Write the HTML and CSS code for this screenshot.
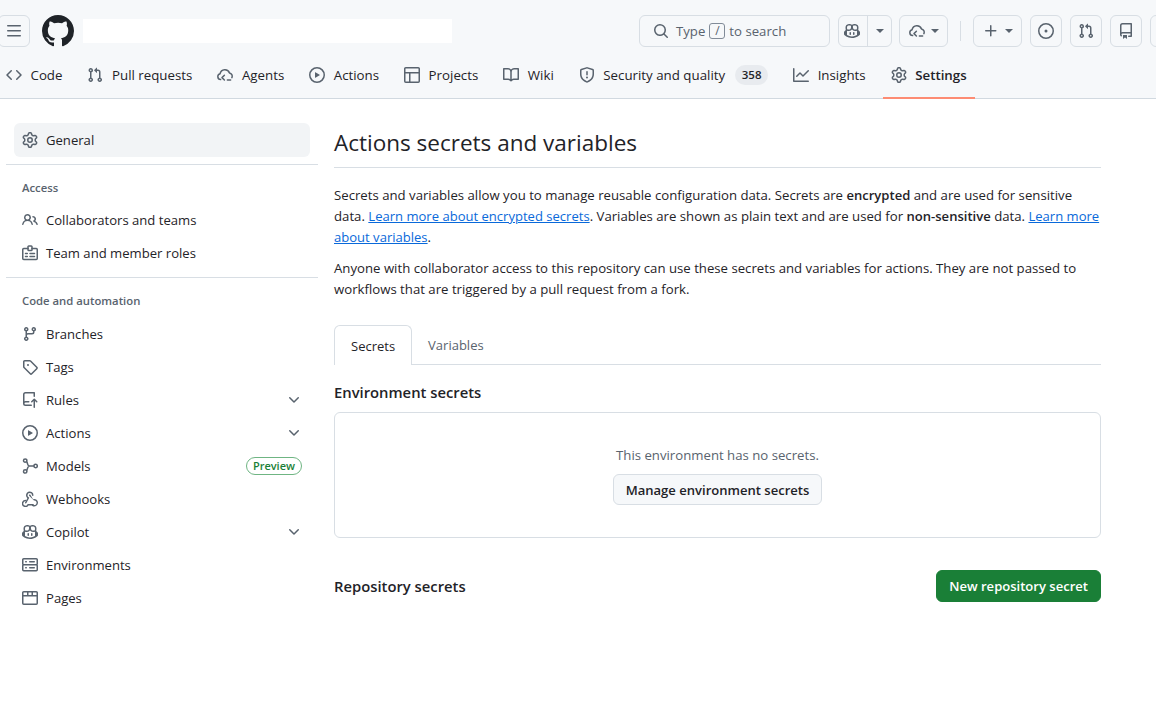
FILE: index.html
```html
<!doctype html>
<html lang="en">
	<head>
		<meta charset="utf-8">
		<title>Actions secrets and variables</title>
		<link rel="stylesheet" href="styles.css">
	</head>
	<body>
		<svg class="defs" width="0" height="0">
			<symbol id="i-bars" viewBox="0 0 16 16"><path d="M1 2.75A.75.75 0 011.75 2h12.5a.75.75 0 010 1.5H1.75A.75.75 0 011 2.75zm0 5A.75.75 0 011.75 7h12.5a.75.75 0 010 1.5H1.75A.75.75 0 011 7.75zM1.75 12h12.5a.75.75 0 010 1.5H1.75a.75.75 0 010-1.5z"/></symbol>
			<symbol id="i-github" viewBox="0 0 16 16"><path d="M8 0c4.42 0 8 3.58 8 8a8.013 8.013 0 01-5.45 7.59c-.4.08-.55-.17-.55-.38 0-.27.01-1.13.01-2.2 0-.75-.25-1.23-.54-1.48 1.78-.2 3.65-.88 3.65-3.95 0-.88-.31-1.59-.82-2.15.08-.2.36-1.02-.08-2.12 0 0-.67-.22-2.2.82-.64-.18-1.32-.27-2-.27-.68 0-1.36.09-2 .27-1.53-1.03-2.2-.82-2.2-.82-.44 1.1-.16 1.92-.08 2.12-.51.56-.82 1.28-.82 2.15 0 3.06 1.86 3.75 3.64 3.95-.23.2-.44.55-.51 1.07-.46.21-1.61.55-2.33-.66-.15-.24-.6-.83-1.23-.82-.67.01-.27.38.01.53.34.19.73.9.82 1.13.16.45.68 1.31 2.69.94 0 .67.01 1.3.01 1.49 0 .21-.15.45-.55.38A7.995 7.995 0 010 8c0-4.42 3.58-8 8-8Z"/></symbol>
			<symbol id="i-search" viewBox="0 0 16 16"><path d="M10.68 11.74a6 6 0 01-7.922-8.982 6 6 0 018.982 7.922l3.04 3.04a.749.749 0 01-.326 1.275.749.749 0 01-.734-.215zM11.5 7a4.499 4.499 0 10-8.997 0A4.499 4.499 0 0011.5 7z"/></symbol>
			<symbol id="i-copilot" viewBox="0 0 16 16"><path d="M7.998 15.035c-4.562 0-7.873-2.914-7.998-3.749V9.338c.085-.628.677-1.686 1.588-2.065.013-.07.024-.143.036-.218.029-.183.06-.384.126-.612-.201-.508-.254-1.084-.254-1.656 0-.87.128-1.769.693-2.484.579-.733 1.494-1.124 2.724-1.261 1.206-.134 2.262.034 2.944.765.05.053.096.108.139.165.044-.057.094-.112.143-.165.682-.731 1.738-.899 2.944-.765 1.23.137 2.145.528 2.724 1.261.566.715.693 1.614.693 2.484 0 .572-.053 1.148-.254 1.656.066.228.098.429.126.612.012.076.024.148.037.218.924.385 1.522 1.471 1.591 2.095v1.872c0 .766-3.351 3.795-8.002 3.795Zm0-1.485c2.28 0 4.584-1.11 5.002-1.433V7.862l-.023-.116c-.49.21-1.075.291-1.727.291-1.146 0-2.059-.327-2.71-.991A3.222 3.222 0 0 1 8 6.303a3.24 3.24 0 0 1-.544.743c-.65.664-1.563.991-2.71.991-.652 0-1.236-.081-1.727-.291l-.023.116v4.255c.419.323 2.722 1.433 5.002 1.433ZM6.762 2.83c-.193-.206-.637-.413-1.682-.297-1.019.113-1.479.404-1.713.7-.247.312-.369.789-.369 1.554 0 .793.129 1.171.308 1.371.162.181.519.379 1.442.379.853 0 1.339-.235 1.638-.54.315-.322.527-.827.617-1.553.117-.935-.037-1.395-.241-1.614Zm4.155-.297c-1.044-.116-1.488.091-1.681.297-.204.219-.359.679-.242 1.614.091.726.303 1.231.618 1.553.299.305.784.54 1.638.54.922 0 1.28-.198 1.442-.379.179-.2.308-.578.308-1.371 0-.765-.123-1.242-.37-1.554-.233-.296-.693-.587-1.713-.7Z"/><path d="M6.25 9.037a.75.75 0 0 1 .75.75v1.501a.75.75 0 0 1-1.5 0V9.787a.75.75 0 0 1 .75-.75Zm4.25.75v1.501a.75.75 0 0 1-1.5 0V9.787a.75.75 0 0 1 1.5 0Z"/></symbol>
			<symbol id="i-agent" viewBox="0 0 16 16"><g fill="none" stroke="currentColor" stroke-width="1.5" stroke-linecap="round" stroke-linejoin="round"><path d="M3.6 12.6A3 3 0 0 1 3.1 6.7 4.9 4.9 0 0 1 12.5 6a3.3 3.3 0 0 1 2.4 4.6"/><path d="M7.4 8.2 5 10.6l2.4 2.4"/><path d="M10.4 13h3.2"/></g></symbol>
			<symbol id="i-plus" viewBox="0 0 16 16"><path d="M7.75 2a.75.75 0 01.75.75V7h4.25a.75.75 0 010 1.5H8.5v4.25a.75.75 0 01-1.5 0V8.5H2.75a.75.75 0 010-1.5H7V2.75A.75.75 0 017.75 2z"/></symbol>
			<symbol id="i-issue" viewBox="0 0 16 16"><path d="M8 9.5a1.5 1.5 0 100-3 1.5 1.5 0 000 3z"/><path d="M8 0a8 8 0 110 16A8 8 0 018 0zM1.5 8a6.5 6.5 0 1013 0 6.5 6.5 0 00-13 0z"/></symbol>
			<symbol id="i-pr" viewBox="0 0 16 16"><path d="M1.5 3.25a2.25 2.25 0 113 2.122v5.256a2.251 2.251 0 11-1.5 0V5.372A2.25 2.25 0 011.5 3.25zm5.677-.177L9.573.677A.25.25 0 0110 .854V2.5h1A2.5 2.5 0 0113.5 5v5.628a2.251 2.251 0 11-1.5 0V5a1 1 0 00-1-1h-1v1.646a.25.25 0 01-.427.177L7.177 3.427a.25.25 0 010-.354zM3.75 2.5a.75.75 0 100 1.5.75.75 0 000-1.5zm0 9.5a.75.75 0 100 1.5.75.75 0 000-1.5zm8.25.75a.75.75 0 101.5 0 .75.75 0 00-1.5 0z"/></symbol>
			<symbol id="i-repo" viewBox="0 0 16 16"><path d="M2 2.5A2.5 2.5 0 014.5 0h8.75a.75.75 0 01.75.75v12.5a.75.75 0 01-.75.75h-2.5a.75.75 0 010-1.5h1.75v-2h-8a1 1 0 00-.714 1.7.75.75 0 11-1.072 1.05A2.495 2.495 0 012 11.5zm10.5-1h-8a1 1 0 00-1 1v6.708A2.486 2.486 0 014.5 9h8zM5 12.25a.25.25 0 01.25-.25h3.5a.25.25 0 01.25.25v3.25a.25.25 0 01-.4.2l-1.45-1.087a.249.249 0 00-.3 0L5.4 15.7a.25.25 0 01-.4-.2z"/></symbol>
			<symbol id="i-code" viewBox="0 0 16 16"><path d="M11.28 3.22l4.25 4.25a.75.75 0 010 1.06l-4.25 4.25a.749.749 0 01-1.275-.326.749.749 0 01.215-.734L13.94 8l-3.72-3.72a.749.749 0 01.326-1.275.749.749 0 01.734.215zm-6.56 0a.751.751 0 011.042.018.751.751 0 01.018 1.042L2.06 8l3.72 3.72a.749.749 0 01-.326 1.275.749.749 0 01-.734-.215L.47 8.53a.75.75 0 010-1.06z"/></symbol>
			<symbol id="i-play" viewBox="0 0 16 16"><path d="M8 0a8 8 0 110 16A8 8 0 018 0zM1.5 8a6.5 6.5 0 1013 0 6.5 6.5 0 00-13 0zm4.879-2.773l4.264 2.559a.25.25 0 010 .428l-4.264 2.559A.25.25 0 016 10.559V5.442a.25.25 0 01.379-.215z"/></symbol>
			<symbol id="i-table" viewBox="0 0 16 16"><path d="M0 1.75C0 .784.784 0 1.75 0h12.5C15.216 0 16 .784 16 1.75v12.5A1.75 1.75 0 0114.25 16H1.75A1.75 1.75 0 010 14.25zM6.5 6.5v8h7.75a.25.25 0 00.25-.25V6.5zm8-1.5V1.75a.25.25 0 00-.25-.25H1.75a.25.25 0 00-.25.25V5zM1.5 6.5v7.75c0 .138.112.25.25.25H5v-8z"/></symbol>
			<symbol id="i-book" viewBox="0 0 16 16"><path d="M0 1.75A.75.75 0 01.75 1h4.253c1.227 0 2.317.59 3 1.501A3.743 3.743 0 0111.006 1h4.245a.75.75 0 01.75.75v10.5a.75.75 0 01-.75.75h-4.507a2.25 2.25 0 00-1.591.659l-.622.621a.75.75 0 01-1.06 0l-.622-.621A2.25 2.25 0 005.258 13H.75a.75.75 0 01-.75-.75zm7.251 10.324l.004-5.073-.002-2.253A2.25 2.25 0 005.003 2.5H1.5v9h3.757a3.75 3.75 0 011.994.574zM8.755 4.75l-.004 7.322a3.752 3.752 0 011.992-.572H14.5v-9h-3.495a2.25 2.25 0 00-2.25 2.25z"/></symbol>
			<symbol id="i-shield" viewBox="0 0 16 16"><path d="M7.467.133a1.748 1.748 0 011.066 0l5.25 1.68A1.75 1.75 0 0115 3.48V7c0 1.566-.32 3.182-1.303 4.682-.983 1.498-2.585 2.813-5.032 3.855a1.697 1.697 0 01-1.33 0c-2.447-1.042-4.049-2.357-5.032-3.855C1.32 10.182 1 8.566 1 7V3.48a1.75 1.75 0 011.217-1.667zm.61 1.429a.25.25 0 00-.153 0l-5.25 1.68a.25.25 0 00-.174.238V7c0 1.358.275 2.666 1.057 3.86.784 1.194 2.121 2.34 4.366 3.297a.196.196 0 00.154 0c2.245-.956 3.582-2.104 4.366-3.298C13.225 9.666 13.5 8.36 13.5 7V3.48a.251.251 0 00-.174-.237l-5.25-1.68zM8.75 4.75v3a.75.75 0 01-1.5 0v-3a.75.75 0 011.5 0zM9 10.5a1 1 0 11-2 0 1 1 0 012 0z"/></symbol>
			<symbol id="i-graph" viewBox="0 0 16 16"><path d="M1.5 1.75V13.5h13.75a.75.75 0 010 1.5H.75a.75.75 0 01-.75-.75V1.75a.75.75 0 011.5 0zm14.28 2.53l-5.25 5.25a.75.75 0 01-1.06 0L7 7.06 4.28 9.78a.751.751 0 01-1.042-.018.751.751 0 01-.018-1.042l3.25-3.25a.75.75 0 011.06 0L10 7.94l4.72-4.72a.751.751 0 011.042.018.751.751 0 01.018 1.042z"/></symbol>
			<symbol id="i-gear" viewBox="0 0 16 16"><path d="M8 0a8.2 8.2 0 01.701.031C9.444.095 9.99.645 10.16 1.29l.288 1.107c.018.066.079.158.212.224.231.114.454.243.668.386.123.082.233.09.299.071l1.103-.303c.644-.176 1.392.021 1.82.63.27.385.506.792.704 1.218.315.675.111 1.422-.364 1.891l-.814.806c-.049.048-.098.147-.088.294.016.257.016.515 0 .772-.01.147.038.246.088.294l.814.806c.475.469.679 1.216.364 1.891a7.977 7.977 0 01-.704 1.217c-.428.61-1.176.807-1.82.63l-1.102-.302c-.067-.019-.177-.011-.3.071a5.909 5.909 0 01-.668.386c-.133.066-.194.158-.211.224l-.29 1.106c-.168.646-.715 1.196-1.458 1.26a8.006 8.006 0 01-1.402 0c-.743-.064-1.289-.614-1.458-1.26l-.289-1.106c-.018-.066-.079-.158-.212-.224a5.738 5.738 0 01-.668-.386c-.123-.082-.233-.09-.299-.071l-1.103.303c-.644.176-1.392-.021-1.82-.63a8.12 8.12 0 01-.704-1.218c-.315-.675-.111-1.422.363-1.891l.815-.806c.05-.048.098-.147.088-.294a6.214 6.214 0 010-.772c.01-.147-.038-.246-.088-.294l-.815-.806C.635 6.045.431 5.298.746 4.623a7.92 7.92 0 01.704-1.217c.428-.61 1.176-.807 1.82-.63l1.102.302c.067.019.177.011.3-.071.214-.143.437-.272.668-.386.133-.066.194-.158.211-.224l.29-1.106C6.009.645 6.556.095 7.299.03 7.53.01 7.764 0 8 0zm-.571 1.525c-.036.003-.108.036-.137.146l-.289 1.105c-.147.561-.549.967-.998 1.189-.173.086-.34.183-.5.29-.417.278-.97.423-1.529.27l-1.103-.303c-.109-.03-.175.016-.195.045-.22.312-.412.644-.573.99-.014.031-.021.11.059.19l.815.806c.411.406.562.957.53 1.456a4.709 4.709 0 000 .582c.032.499-.119 1.05-.53 1.456l-.815.806c-.081.08-.073.159-.059.19.162.346.353.677.573.989.02.03.085.076.195.046l1.102-.303c.56-.153 1.113-.008 1.53.27.161.107.328.204.501.29.447.222.85.629.997 1.189l.289 1.105c.029.109.101.143.137.146a6.6 6.6 0 001.142 0c.036-.003.108-.036.137-.146l.289-1.105c.147-.561.549-.967.998-1.189.173-.086.34-.183.5-.29.417-.278.97-.423 1.529-.27l1.103.303c.109.029.175-.016.195-.045.22-.313.411-.644.573-.99.014-.031.021-.11-.059-.19l-.815-.806c-.411-.406-.562-.957-.53-1.456a4.709 4.709 0 000-.582c-.032-.499.119-1.05.53-1.456l.815-.806c.081-.08.073-.159.059-.19a6.464 6.464 0 00-.573-.989c-.02-.03-.085-.076-.195-.046l-1.102.303c-.56.153-1.113.008-1.53-.27a4.44 4.44 0 00-.501-.29c-.447-.222-.85-.629-.997-1.189l-.289-1.105c-.029-.11-.101-.143-.137-.146a6.6 6.6 0 00-1.142 0zM11 8a3 3 0 11-6 0 3 3 0 016 0zM9.5 8a1.5 1.5 0 10-3.001.001A1.5 1.5 0 009.5 8z"/></symbol>
			<symbol id="i-people" viewBox="0 0 16 16"><path d="M2 5.5a3.5 3.5 0 115.898 2.549 5.508 5.508 0 013.034 4.084.75.75 0 11-1.482.235 4 4 0 00-7.9 0 .75.75 0 01-1.482-.236A5.507 5.507 0 013.102 8.05 3.493 3.493 0 012 5.5zM11 4a3.001 3.001 0 012.22 5.018 5.01 5.01 0 012.56 3.012.749.749 0 01-.885.954.752.752 0 01-.549-.514 3.507 3.507 0 00-2.522-2.372.75.75 0 01-.574-.73v-.352a.75.75 0 01.416-.672A1.5 1.5 0 0011 5.5.75.75 0 0111 4zm-5.5-.5a2 2 0 10-.001 3.999A2 2 0 005.5 3.5z"/></symbol>
			<symbol id="i-badge" viewBox="0 0 16 16"><g fill="none" stroke="currentColor" stroke-width="1.5" stroke-linecap="round" stroke-linejoin="round"><path d="M6 3.5H1.75a1 1 0 0 0-1 1v9a1 1 0 0 0 1 1h12.5a1 1 0 0 0 1-1v-9a1 1 0 0 0-1-1H10"/><rect x="6" y="1" width="4" height="4.5" rx=".8"/><path d="M3.5 8.5h1.8M3.5 11.5h1.8M8 8.5h4.5M8 11.5h4.5"/></g></symbol>
			<symbol id="i-branch" viewBox="0 0 16 16"><path d="M9.5 3.25a2.25 2.25 0 113 2.122V6A2.5 2.5 0 0110 8.5H6a1 1 0 00-1 1v1.128a2.251 2.251 0 11-1.5 0V5.372a2.25 2.25 0 111.5 0v1.836A2.493 2.493 0 016 7h4a1 1 0 001-1v-.628A2.25 2.25 0 019.5 3.25zm-6 0a.75.75 0 101.5 0 .75.75 0 00-1.5 0zm8.25-.75a.75.75 0 100 1.5.75.75 0 000-1.5zM4.25 12a.75.75 0 100 1.5.75.75 0 000-1.5z"/></symbol>
			<symbol id="i-tag" viewBox="0 0 16 16"><path d="M1 7.775V2.75C1 1.784 1.784 1 2.75 1h5.025c.464 0 .91.184 1.238.513l6.25 6.25a1.75 1.75 0 010 2.474l-5.026 5.026a1.75 1.75 0 01-2.474 0l-6.25-6.25A1.752 1.752 0 011 7.775zm1.5 0c0 .066.026.13.073.177l6.25 6.25a.25.25 0 00.354 0l5.025-5.025a.25.25 0 000-.354l-6.25-6.25a.25.25 0 00-.177-.073H2.75a.25.25 0 00-.25.25zM6 5a1 1 0 110 2 1 1 0 010-2z"/></symbol>
			<symbol id="i-rules" viewBox="0 0 16 16"><path d="M1 2.5A2.5 2.5 0 013.5 0h8.75a.75.75 0 01.75.75v3.5a.75.75 0 01-1.5 0V1.5h-8a1 1 0 00-1 1v6.708A2.493 2.493 0 013.5 9h3.25a.75.75 0 010 1.5H3.5a1 1 0 000 2h5.75a.75.75 0 010 1.5H3.5A2.5 2.5 0 011 11.5zm13.23 7.79h-.001l-1.224-1.224v6.184a.75.75 0 01-1.5 0V9.066L10.28 10.29a.75.75 0 01-1.06-1.061l2.505-2.504a.75.75 0 011.06 0L15.29 9.23a.751.751 0 01-.018 1.042.751.751 0 01-1.042.018z"/></symbol>
			<symbol id="i-models" viewBox="0 0 16 16"><g fill="none" stroke="currentColor" stroke-width="1.5" stroke-linecap="round"><circle cx="3.2" cy="2.6" r="1.7"/><circle cx="3.2" cy="13.4" r="1.7"/><circle cx="13.6" cy="8" r="1.7"/><path d="M4.6 3.6C6 5 5.2 8 7.4 8h4.5M7.4 8C5.2 8 6 11 4.6 12.4"/></g></symbol>
			<symbol id="i-webhook" viewBox="0 0 16 16"><path d="M5.5 4.25a2.25 2.25 0 014.5 0 .75.75 0 001.5 0 3.75 3.75 0 10-6.14 2.889l-2.272 4.258a.75.75 0 001.324.706L7 7.25a.75.75 0 00-.309-1.015A2.25 2.25 0 015.5 4.25z"/><path d="M7.364 3.607a.75.75 0 011.03.257l2.608 4.349a3.75 3.75 0 11-.628 6.785.75.75 0 01.752-1.299 2.25 2.25 0 101.313-4.165.75.75 0 01-.72-.368L7.107 4.636a.75.75 0 01.257-1.03z"/><path d="M3.4 9.6A2.9 2.9 0 1 0 6.1 13.7h5" fill="none" stroke="currentColor" stroke-width="1.5" stroke-linecap="round"/></symbol>
			<symbol id="i-server" viewBox="0 0 16 16"><path d="M1.75 1h12.5c.966 0 1.75.784 1.75 1.75v4c0 .372-.116.717-.314 1 .198.283.314.628.314 1v4a1.75 1.75 0 01-1.75 1.75H1.75A1.75 1.75 0 010 12.75v-4c0-.358.109-.707.314-1a1.739 1.739 0 01-.314-1v-4C0 1.784.784 1 1.75 1zM1.5 2.75v4c0 .138.112.25.25.25h12.5a.25.25 0 00.25-.25v-4a.25.25 0 00-.25-.25H1.75a.25.25 0 00-.25.25zm.25 5.75a.25.25 0 00-.25.25v4c0 .138.112.25.25.25h12.5a.25.25 0 00.25-.25v-4a.25.25 0 00-.25-.25zM7 4.75A.75.75 0 017.75 4h4.5a.75.75 0 010 1.5h-4.5A.75.75 0 017 4.75zM7.75 10h4.5a.75.75 0 010 1.5h-4.5a.75.75 0 010-1.5zM3 4.75A.75.75 0 013.75 4h.5a.75.75 0 010 1.5h-.5A.75.75 0 013 4.75zM3.75 10h.5a.75.75 0 010 1.5h-.5a.75.75 0 010-1.5z"/></symbol>
			<symbol id="i-browser" viewBox="0 0 16 16"><path d="M0 2.75C0 1.784.784 1 1.75 1h12.5c.966 0 1.75.784 1.75 1.75v10.5A1.75 1.75 0 0114.25 15H1.75A1.75 1.75 0 010 13.25zm1.5 3.75v6.75c0 .138.112.25.25.25h12.5a.25.25 0 00.25-.25V6.5zm13-1.5V2.75a.25.25 0 00-.25-.25H11V5zM9.5 5V2.5h-3V5zM5 5V2.5H1.75a.25.25 0 00-.25.25V5z"/></symbol>
			<symbol id="i-chevron" viewBox="0 0 16 16"><path d="M12.78 5.22a.749.749 0 010 1.06l-4.25 4.25a.749.749 0 01-1.06 0L3.22 6.28a.749.749 0 011.06-1.06L8 8.939l3.72-3.719a.749.749 0 011.06 0z"/></symbol>
		</svg>

		<header class="top">
			<div class="top-row">
				<button class="btn-ghost btn-square"><svg class="icon"><use href="#i-bars"/></svg></button>
				<svg class="logo"><use href="#i-github"/></svg>
				<div class="crumb-mask"></div>
				<div class="search">
					<svg class="icon"><use href="#i-search"/></svg>
					<span>Type</span><kbd class="slash">/</kbd><span>to search</span>
				</div>
				<div class="btn-ghost split">
					<span class="split-main"><svg class="icon"><use href="#i-copilot"/></svg></span>
					<span class="split-arrow"><i class="caret"></i></span>
				</div>
				<button class="btn-ghost btn-drop"><svg class="icon"><use href="#i-agent"/></svg><i class="caret"></i></button>
				<span class="top-sep"></span>
				<button class="btn-ghost btn-drop"><svg class="icon"><use href="#i-plus"/></svg><i class="caret"></i></button>
				<button class="btn-ghost btn-square"><svg class="icon"><use href="#i-issue"/></svg></button>
				<button class="btn-ghost btn-square"><svg class="icon"><use href="#i-pr"/></svg></button>
				<button class="btn-ghost btn-square"><svg class="icon"><use href="#i-repo"/></svg></button>
				<button class="btn-ghost btn-square"></button>
			</div>
			<nav class="repo-nav">
				<a class="repo-tab"><svg class="icon"><use href="#i-code"/></svg>Code</a>
				<a class="repo-tab"><svg class="icon"><use href="#i-pr"/></svg>Pull requests</a>
				<a class="repo-tab"><svg class="icon"><use href="#i-agent"/></svg>Agents</a>
				<a class="repo-tab"><svg class="icon"><use href="#i-play"/></svg>Actions</a>
				<a class="repo-tab"><svg class="icon"><use href="#i-table"/></svg>Projects</a>
				<a class="repo-tab"><svg class="icon"><use href="#i-book"/></svg>Wiki</a>
				<a class="repo-tab"><svg class="icon"><use href="#i-shield"/></svg>Security and quality<span class="counter">358</span></a>
				<a class="repo-tab"><svg class="icon"><use href="#i-graph"/></svg>Insights</a>
				<a class="repo-tab active"><svg class="icon"><use href="#i-gear"/></svg>Settings</a>
			</nav>
		</header>

		<div class="page">
			<aside class="side">
				<a class="side-item selected"><svg class="icon"><use href="#i-gear"/></svg>General</a>
				<hr class="side-line">
				<h3 class="side-label">Access</h3>
				<a class="side-item"><svg class="icon"><use href="#i-people"/></svg>Collaborators and teams</a>
				<a class="side-item"><svg class="icon"><use href="#i-badge"/></svg>Team and member roles</a>
				<hr class="side-line wide">
				<h3 class="side-label tall">Code and automation</h3>
				<a class="side-item"><svg class="icon"><use href="#i-branch"/></svg>Branches</a>
				<a class="side-item"><svg class="icon"><use href="#i-tag"/></svg>Tags</a>
				<a class="side-item"><svg class="icon"><use href="#i-rules"/></svg>Rules<svg class="icon chevron"><use href="#i-chevron"/></svg></a>
				<a class="side-item"><svg class="icon"><use href="#i-play"/></svg>Actions<svg class="icon chevron"><use href="#i-chevron"/></svg></a>
				<a class="side-item"><svg class="icon"><use href="#i-models"/></svg>Models<span class="preview">Preview</span></a>
				<a class="side-item"><svg class="icon"><use href="#i-webhook"/></svg>Webhooks</a>
				<a class="side-item"><svg class="icon"><use href="#i-copilot"/></svg>Copilot<svg class="icon chevron"><use href="#i-chevron"/></svg></a>
				<a class="side-item"><svg class="icon"><use href="#i-server"/></svg>Environments</a>
				<a class="side-item"><svg class="icon"><use href="#i-browser"/></svg>Pages</a>
			</aside>

			<main class="main">
				<h1 class="title">Actions secrets and variables</h1>
				<p class="intro">Secrets and variables allow you to manage reusable configuration data. Secrets are <b>encrypted</b> and are used for sensitive data. <a href="#">Learn more about encrypted secrets</a>. Variables are shown as plain text and are used for <b>non-sensitive</b> data. <a href="#">Learn more about variables</a>.</p>
				<p class="intro">Anyone with collaborator access to this repository can use these secrets and variables for actions. They are not passed to workflows that are triggered by a pull request from a fork.</p>
				<div class="tabs">
					<a class="tab current">Secrets</a>
					<a class="tab">Variables</a>
				</div>
				<h2 class="sub">Environment secrets</h2>
				<div class="blank">
					<p class="blank-text">This environment has no secrets.</p>
					<button class="btn btn-manage">Manage environment secrets</button>
				</div>
				<div class="repo-head">
					<h2 class="sub">Repository secrets</h2>
					<button class="btn btn-green">New repository secret</button>
				</div>
			</main>
		</div>
	</body>
</html>
```

FILE: styles.css
```css
html,
body {
	margin: 0;
	padding: 0;
}
body {
	height: 720px;
	overflow: hidden;
	color: #1f2328;
	font-family: "Open Sans", "Noto Sans", sans-serif;
	font-size: 13.2px;
	background: #fff;
}
.defs {
	display: none;
}
.icon {
	flex: none;
	width: 16px;
	height: 16px;
	color: #59636e;
	fill: currentColor;
}

/* header */
.top {
	height: 98px;
	background: #f6f8fa;
	border-bottom: 1px solid #d1d9e0;
}
.top-row {
	display: flex;
	align-items: center;
	height: 32px;
	padding-top: 15px;
	margin-left: -2px;
	width: 1200px;
}
.btn-ghost {
	display: flex;
	align-items: center;
	justify-content: center;
	box-sizing: border-box;
	height: 32px;
	padding: 0;
	border: 1px solid #d8dee4;
	border-radius: 6px;
	background: transparent;
}
.btn-square {
	width: 32px;
	margin-right: 8px;
}
.btn-drop {
	width: 49px;
	gap: 6px;
}
.logo {
	width: 32px;
	height: 32px;
	margin-left: 4px;
	fill: #1f2328;
}
.crumb-mask {
	width: 369px;
	height: 24px;
	margin-left: 9px;
	margin-right: 187px;
	background: #fff;
}
.search {
	display: flex;
	align-items: center;
	box-sizing: border-box;
	width: 191px;
	height: 32px;
	padding-left: 13px;
	border: 1px solid #d8dee4;
	border-radius: 6px;
	color: #59636e;
}
.search .icon {
	margin-right: 7px;
}
.slash {
	width: 16px;
	height: 16px;
	margin: 0 4px 0 4px;
	border: 1px solid #818b98;
	border-radius: 3px;
	text-align: center;
	line-height: 14px;
	font-family: inherit;
	font-size: 12px;
	box-sizing: border-box;
}
.split {
	width: 54px;
	margin: 0 7px 0 8px;
}
.split-main {
	display: flex;
	align-items: center;
	justify-content: center;
	width: 29px;
	height: 100%;
	padding-right: 2px;
	box-sizing: border-box;
	border-right: 1px solid #d8dee4;
}
.split-arrow {
	display: flex;
	align-items: center;
	justify-content: center;
	flex: 1;
}
.caret {
	width: 0;
	height: 0;
	border-style: solid;
	border-width: 4px 4px 0;
	border-color: #59636e transparent transparent;
}
.top-sep {
	width: 1px;
	height: 20px;
	margin: 0 12px;
	background: #d8dee4;
}
.top-sep + .btn-drop {
	margin-right: 8px;
}
.repo-nav {
	display: flex;
	gap: 9px;
	height: 46px;
	margin: 5px 0 0 -2px;
}
.repo-tab {
	display: flex;
	align-items: center;
	gap: 8.5px;
	box-sizing: border-box;
	height: 47px;
	padding: 0 8px 1px;
	white-space: nowrap;
	font-size: 13.3px;
}
.repo-tab.active {
	padding: 0 8px;
	font-weight: 600;
	border-bottom: 2px solid #fd8c73;
}
.counter {
	min-width: 20px;
	padding: 0 6.5px;
	margin-left: 1.5px;
	border-radius: 10px;
	line-height: 20px;
	font-size: 11.5px;
	font-weight: 600;
	text-align: center;
	background: #e8ebef;
}

/* layout */
.page {
	display: flex;
	gap: 16px;
	padding: 24px 0 0 6px;
}
.side {
	flex: none;
	width: 312px;
}
.side-item {
	display: flex;
	align-items: center;
	gap: 8px;
	height: 33px;
	padding: 0 16px;
	font-size: 13.1px;
}
.side-item.selected {
	margin: 0 8px;
	padding: 0 8px;
	height: 34px;
	border-radius: 6px;
	background: #f2f4f6;
}
.side-line {
	height: 0;
	margin: 7px 0 0;
	border: 0;
	border-top: 1px solid #d8dee4;
}
.side-line.wide {
	margin-top: 8px;
}
.side-label {
	margin: 13px 0 0;
	padding: 0 16px;
	height: 25px;
	line-height: 19px;
	color: #59636e;
	font-size: 11.3px;
	font-weight: 600;
}
.side-label.tall {
	height: 26px;
}
.chevron {
	margin-left: auto;
}
.preview {
	margin-left: auto;
	padding: 0 6px;
	border: 1px solid #6fb583;
	border-radius: 10px;
	line-height: 16px;
	color: #1a7f37;
	font-size: 11px;
	font-weight: 600;
}

/* main */
.main {
	flex: none;
	width: 767px;
}
.title {
	margin: 0 0 17px;
	padding: 3px 0 7px;
	border-bottom: 1px solid #d8dee4;
	line-height: 34px;
	font-size: 22.5px;
	font-weight: 400;
}
.intro {
	margin: 0 0 10px;
	line-height: 21px;
}
.intro a {
	color: #0969da;
	font-size: 13.05px;
	text-decoration: underline;
}
.intro b {
	font-size: 13.05px;
	font-weight: 600;
}
.tabs {
	display: flex;
	height: 39px;
	margin-top: 25px;
	border-bottom: 1px solid #d8dee4;
}
.tab {
	display: flex;
	align-items: center;
	padding: 0 16px;
	height: 40px;
	box-sizing: border-box;
	color: #59636e;
	font-size: 13px;
}
.tab.current {
	border: 1px solid #d8dee4;
	border-bottom: 0;
	border-radius: 6px 6px 0 0;
	color: #1f2328;
	background: #fff;
}
.sub {
	margin: 0;
	line-height: 22px;
	font-size: 14.8px;
	font-weight: 600;
}
.tabs + .sub {
	margin-top: 16px;
}
.blank {
	display: flex;
	flex-direction: column;
	align-items: center;
	box-sizing: border-box;
	height: 126px;
	margin-top: 9px;
	padding-top: 32px;
	border: 1px solid #d8dee4;
	border-radius: 6px;
}
.blank-text {
	margin: 0 0 8px;
	line-height: 21px;
	color: #59636e;
}
.btn {
	box-sizing: border-box;
	height: 32px;
	padding: 0 12px;
	border: 1px solid #d8dee4;
	border-radius: 6px;
	color: #1f2328;
	font-family: inherit;
	font-size: 13.05px;
	font-weight: 600;
	background: #f6f8fa;
}
.btn-manage {
	height: 31px;
}
.btn-green {
	border-color: #1a7f37;
	color: #fff;
	background: #1a7f37;
}
.repo-head {
	display: flex;
	align-items: center;
	justify-content: space-between;
	margin-top: 32px;
}
```
